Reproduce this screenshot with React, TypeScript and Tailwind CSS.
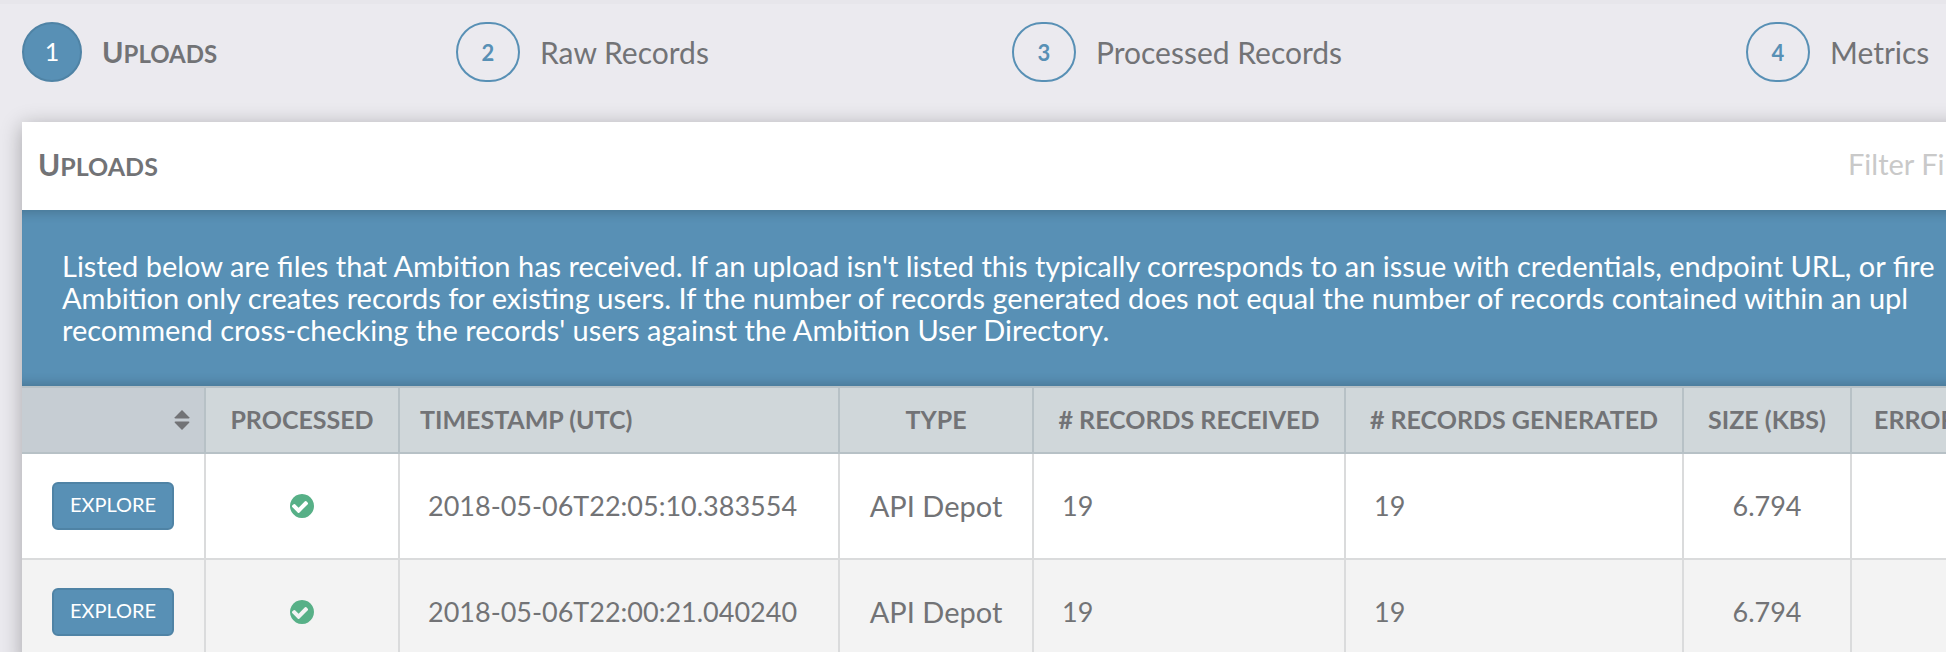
import clsx from 'clsx';

const steps = [
  { number: 1, label: 'Uploads', active: true },
  { number: 2, label: 'Raw Records', active: false },
  { number: 3, label: 'Processed Records', active: false },
  { number: 4, label: 'Metrics', active: false },
];

const uploads = [
  { timestamp: '2018-05-06T22:05:10.383554', type: 'API Depot', received: 19, generated: 19, size: '6.794' },
  { timestamp: '2018-05-06T22:00:21.040240', type: 'API Depot', received: 19, generated: 19, size: '6.794' },
];

function CheckCircle() {
  return (
    <svg className="mx-auto size-6 fill-[#57b087]" viewBox="128 128 1536 1536" fillRule="evenodd" role="img" aria-label="Processed">
      <path d="M1284 734q0-28-18-46l-91-90q-19-19-45-19t-45 19l-408 407-226-226q-19-19-45-19t-45 19l-91 90q-18 18-18 46 0 27 18 45l362 362q19 19 45 19 27 0 46-19l543-543q18-18 18-45zm380 162q0 209-103 385.5t-279.5 279.5-385.5 103-385.5-103-279.5-279.5-103-385.5 103-385.5 279.5-279.5 385.5-103 385.5 103 279.5 279.5 103 385.5z" />
    </svg>
  );
}

function SortIcon() {
  return (
    <svg className="ml-auto h-5 w-4 fill-[#727376]" viewBox="0 0 16 20" aria-hidden="true">
      <path d="M8 0 15.2 7.2Q15.8 8.6 14.5 8.6H1.5Q.2 8.6.8 7.2Z" />
      <path d="M8 20 15.2 12.8Q15.8 11.4 14.5 11.4H1.5Q.2 11.4.8 12.8Z" />
    </svg>
  );
}

export default function App() {
  return (
    <div className="h-screen overflow-hidden border-t-4 border-[#e7e6eb] bg-[#ebeaef] pl-[22px] font-[Lato,sans-serif] text-[#727376]">
      {/* Steps */}
      <nav className="grid grid-cols-[434fr_556fr_734fr_200fr] pt-[18px] pb-10">
        {steps.map((step) => (
          <a key={step.number} href={`#step-${step.number}`} className="flex items-center gap-5 whitespace-nowrap">
            <span
              className={clsx(
                'flex h-[60px] shrink-0 items-center justify-center rounded-[30px] border-2',
                step.active
                  ? 'w-[60px] border-[#4f83a5] bg-[#5890b5] text-[25px] text-white'
                  : 'w-16 border-[#5890b5] text-[22px] font-bold text-[#5890b5]'
              )}
            >
              {step.number}
            </span>
            <span className={step.active ? 'block text-2xl font-bold uppercase first-letter:text-[29px]' : 'text-[30px]'}>
              {step.label}
            </span>
          </a>
        ))}
      </nav>

      {/* Uploads card, runs off the right edge of the window */}
      <section className="-mr-6 bg-white shadow-[0_4px_20px_rgba(0,0,0,0.3)]">
        <header className="flex h-[88px] items-center justify-between pr-6 pb-1 pl-4">
          <h2 className="text-[25px] font-bold uppercase first-letter:text-[30px]">Uploads</h2>
          <input
            type="text"
            aria-label="Filter Files"
            placeholder="Filter Files"
            className="w-[98px] text-[29px] outline-none placeholder:text-[#c9c9c9]"
          />
        </header>

        <div className="overflow-hidden bg-[#5890b5] px-10 py-10 text-[29px] leading-8 whitespace-nowrap text-white shadow-[inset_0_12px_12px_-10px_rgba(0,0,0,0.2),inset_0_-12px_12px_-10px_rgba(0,0,0,0.2)]">
          <p>Listed below are files that Ambition has received. If an upload isn't listed this typically corresponds to an issue with credentials, endpoint URL, or fire</p>
          <p>Ambition only creates records for existing users. If the number of records generated does not equal the number of records contained within an upl</p>
          <p>recommend cross-checking the records' users against the Ambition User Directory.</p>
        </div>

        <table className="w-full table-fixed border-separate border-spacing-0 whitespace-nowrap">
          <colgroup>
            <col className="w-[184px]" />
            <col className="w-[194px]" />
            <col className="w-[440px]" />
            <col className="w-[194px]" />
            <col className="w-[312px]" />
            <col className="w-[338px]" />
            <col className="w-[168px]" />
            <col />
          </colgroup>
          <thead>
            <tr className="h-[68px] bg-[#d0d7da] text-[25px] *:border-y-2 *:border-r-2 *:border-[#b7c1c6] *:p-0 *:font-bold">
              <th className="bg-[#c6cdd3]">
                <button type="button" aria-label="Sort" className="block w-full pr-[14px]">
                  <SortIcon />
                </button>
              </th>
              <th>PROCESSED</th>
              <th className="text-left"><span className="pl-5">TIMESTAMP (UTC)</span></th>
              <th>TYPE</th>
              <th># RECORDS RECEIVED</th>
              <th># RECORDS GENERATED</th>
              <th>SIZE (KBS)</th>
              <th className="overflow-hidden text-left"><span className="pl-[22px]">ERROR</span></th>
            </tr>
          </thead>
          <tbody>
            {uploads.map((upload) => (
              <tr
                key={upload.timestamp}
                className="h-[106px] text-[27px] odd:bg-white even:bg-[#f3f3f3] *:border-r-2 *:border-b-2 *:border-[#dadbdc]"
              >
                <td className="text-center">
                  <button
                    type="button"
                    className="mx-auto block h-12 w-[122px] rounded-md border-2 border-[#4f83a5] bg-[#5890b5] pb-1 text-xl text-white"
                  >
                    EXPLORE
                  </button>
                </td>
                <td><CheckCircle /></td>
                <td className="px-7">{upload.timestamp}</td>
                <td className="text-center text-[29px]">{upload.type}</td>
                <td className="px-7">{upload.received}</td>
                <td className="px-7">{upload.generated}</td>
                <td className="text-center">{upload.size}</td>
                <td />
              </tr>
            ))}
          </tbody>
        </table>
      </section>
    </div>
  );
}
